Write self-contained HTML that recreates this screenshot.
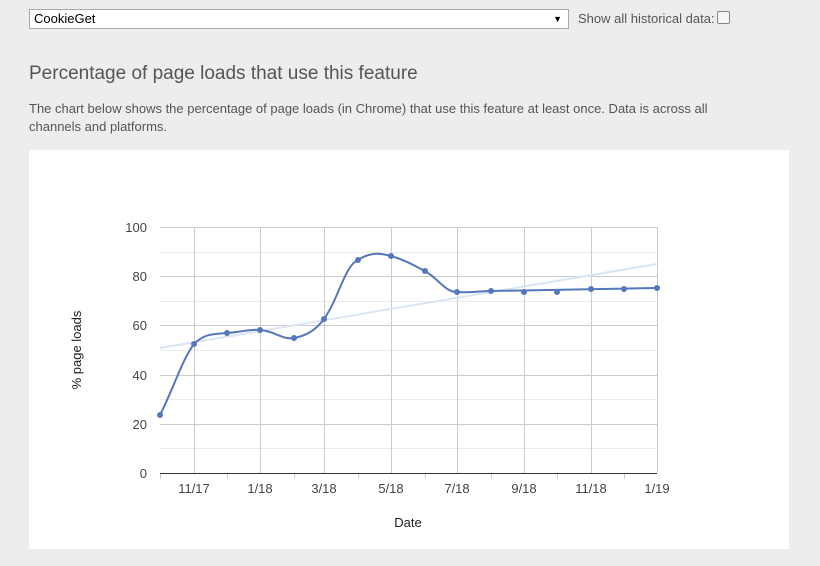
<!DOCTYPE html>
<html><head><style>
body{margin:0;width:820px;height:566px;background:#ededed;font-family:"Liberation Sans",sans-serif;color:#555;position:relative;overflow:hidden}
.sel{position:absolute;left:29px;top:9px;width:540px;height:20px;background:#fff;border:1px solid #a9a9a9;box-sizing:border-box;font-size:13px;color:#000;line-height:18px;padding-left:4px}
.sel span{position:absolute;right:6px;top:0;font-size:9px}
.chk{position:absolute;left:578px;top:11px;font-size:13px;color:#555}
.box{display:inline-block;width:11px;height:11px;border:1px solid #888;border-radius:2px;background:#f6f6f6;vertical-align:-1px;margin-left:2px}
h2{position:absolute;left:29px;top:63px;margin:0;font-weight:normal;font-size:19px;color:#555}
p{position:absolute;left:29px;top:100px;margin:0;font-size:13px;line-height:18px;width:715px;color:#555}
.panel{position:absolute;left:29px;top:150px;width:760px;height:399px;background:#fff}
</style></head><body>
<div class="sel">CookieGet<span>▼</span></div>
<div class="chk">Show all historical data:<span class="box"></span></div>
<h2>Percentage of page loads that use this feature</h2>
<p>The chart below shows the percentage of page loads (in Chrome) that use this feature at least once. Data is across all channels and platforms.</p>
<div class="panel"></div>
<svg width="820" height="566" style="position:absolute;left:0;top:0" font-family="Liberation Sans, sans-serif">
<g stroke="#ebebeb" stroke-width="1">
<line x1="160" x2="657" y1="252.5" y2="252.5"/><line x1="160" x2="657" y1="301.5" y2="301.5"/><line x1="160" x2="657" y1="350.5" y2="350.5"/><line x1="160" x2="657" y1="399.5" y2="399.5"/><line x1="160" x2="657" y1="448.5" y2="448.5"/>
</g>
<g stroke="#ccc" stroke-width="1">
<line x1="160" x2="657" y1="227.5" y2="227.5"/><line x1="160" x2="657" y1="276.5" y2="276.5"/><line x1="160" x2="657" y1="325.5" y2="325.5"/><line x1="160" x2="657" y1="375.5" y2="375.5"/><line x1="160" x2="657" y1="424.5" y2="424.5"/>
<line x1="194.5" x2="194.5" y1="227" y2="473"/><line x1="260.5" x2="260.5" y1="227" y2="473"/><line x1="324.5" x2="324.5" y1="227" y2="473"/><line x1="391.5" x2="391.5" y1="227" y2="473"/><line x1="457.5" x2="457.5" y1="227" y2="473"/><line x1="524.5" x2="524.5" y1="227" y2="473"/><line x1="591.5" x2="591.5" y1="227" y2="473"/><line x1="657.5" x2="657.5" y1="227" y2="473"/>
<line x1="160.5" x2="160.5" y1="473" y2="479"/><line x1="227.5" x2="227.5" y1="473" y2="479"/><line x1="294.5" x2="294.5" y1="473" y2="479"/><line x1="358.5" x2="358.5" y1="473" y2="479"/><line x1="425.5" x2="425.5" y1="473" y2="479"/><line x1="491.5" x2="491.5" y1="473" y2="479"/><line x1="557.5" x2="557.5" y1="473" y2="479"/><line x1="624.5" x2="624.5" y1="473" y2="479"/>
</g>
<line x1="160" x2="657" y1="473.5" y2="473.5" stroke="#333"/>
<line x1="160" y1="348" x2="657" y2="264" stroke="#dbe5f3" stroke-width="2"/>
<path d="M160,415 C175,385 182,360 194,344 C205,333 215,334 227,333 C240,332 250,329 260,330 C275,331 282,340 294,338 C306,336 316,330 324,319 C338,300 345,265 358,260 C370,252 380,253 391,256 C405,260 415,266 425,271 C440,280 445,292 457,292 C470,293 480,291 491,291 L657,288" fill="none" stroke="#5577bb" stroke-width="2"/>
<g fill="#5577bb">
<circle cx="160" cy="415" r="3"/><circle cx="194" cy="344" r="3"/><circle cx="227" cy="333" r="3"/><circle cx="260" cy="330" r="3"/><circle cx="294" cy="338" r="3"/><circle cx="324" cy="319" r="3"/><circle cx="358" cy="260" r="3"/><circle cx="391" cy="256" r="3"/><circle cx="425" cy="271" r="3"/><circle cx="457" cy="292" r="3"/><circle cx="491" cy="291" r="3"/><circle cx="524" cy="292" r="3"/><circle cx="557" cy="292" r="3"/><circle cx="591" cy="289" r="3"/><circle cx="624" cy="289" r="3"/><circle cx="657" cy="288" r="3"/>
</g>
<g font-size="13" fill="#444" text-anchor="end">
<text x="147" y="232">100</text><text x="147" y="281">80</text><text x="147" y="330">60</text><text x="147" y="380">40</text><text x="147" y="429">20</text><text x="147" y="478">0</text>
</g>
<g font-size="13" fill="#444" text-anchor="middle">
<text x="194" y="493">11/17</text><text x="260" y="493">1/18</text><text x="324" y="493">3/18</text><text x="391" y="493">5/18</text><text x="457" y="493">7/18</text><text x="524" y="493">9/18</text><text x="591" y="493">11/18</text><text x="657" y="493">1/19</text>
<text x="408" y="527" fill="#222">Date</text>
<text x="0" y="0" fill="#222" transform="translate(81,350) rotate(-90)">% page loads</text>
</g>
</svg>
</body></html>
